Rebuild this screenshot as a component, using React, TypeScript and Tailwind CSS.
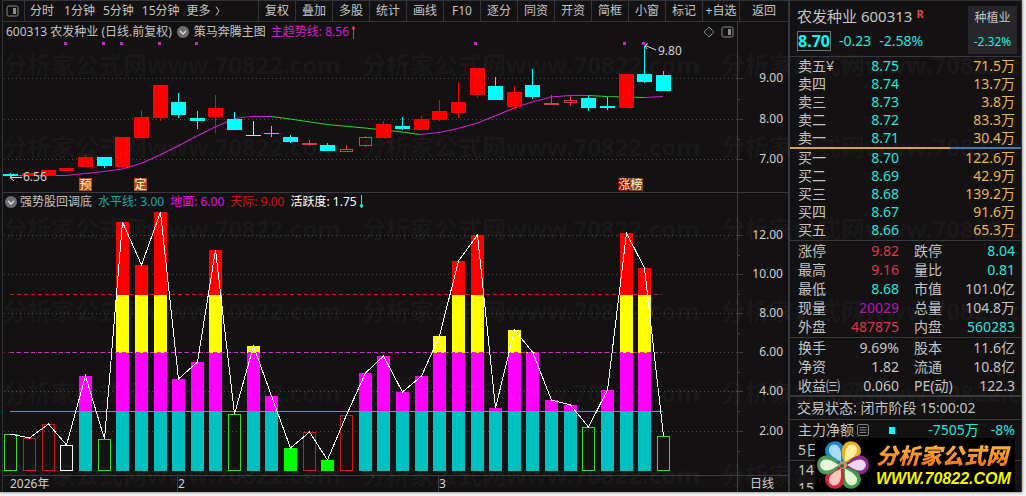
import { clsx } from "clsx";

type Kind = "up" | "down" | "hollow" | "flat" | "doji";

interface Candle {
  top: number;
  bottom: number;
  high: number;
  low: number;
  kind: Kind;
}

const c = (top: number, bottom: number, high: number, low: number, kind: Kind): Candle => ({ top, bottom, high, low, kind });

const candles: Candle[] = [
  c(174, 176, 173, 178, "down"),
  c(173, 176, 173, 176, "up"),
  c(170, 176, 170, 176, "up"),
  c(168, 171, 168, 171, "up"),
  c(157, 167, 155, 167, "up"),
  c(157, 166, 157, 168, "down"),
  c(137, 167, 137, 167, "up"),
  c(117, 138, 110, 138, "up"),
  c(85, 118, 85, 121, "up"),
  c(102, 115, 93, 118, "down"),
  c(118, 121, 111, 129, "down"),
  c(108, 117, 95, 133, "up"),
  c(119, 130, 112, 130, "down"),
  c(135, 136, 121, 136, "doji"),
  c(133, 134, 126, 137, "down"),
  c(137, 142, 135, 143, "down"),
  c(143, 145, 140, 146, "flat"),
  c(145, 151, 143, 151, "down"),
  c(149, 152, 145, 152, "hollow"),
  c(137, 146, 136, 147, "hollow"),
  c(124, 138, 121, 138, "up"),
  c(126, 129, 117, 130, "down"),
  c(119, 130, 116, 130, "up"),
  c(111, 120, 100, 121, "up"),
  c(102, 113, 82, 118, "up"),
  c(68, 95, 68, 98, "up"),
  c(86, 100, 77, 100, "down"),
  c(92, 107, 86, 110, "up"),
  c(85, 97, 69, 99, "down"),
  c(103, 105, 95, 105, "flat"),
  c(100, 103, 96, 106, "hollow"),
  c(98, 108, 96, 111, "down"),
  c(106, 108, 97, 110, "down"),
  c(74, 108, 74, 108, "up"),
  c(74, 82, 46, 83, "down"),
  c(75, 91, 71, 91, "down"),
];

const candleColor: Record<Kind, string> = {
  up: "#ff0000",
  down: "#00ffff",
  hollow: "#d83a4a",
  flat: "#d83a4a",
  doji: "#d8d8d8",
};

// y of the top of every bar in the lower chart
const activity = [
  434, 438, 424, 445, 376, 439, 222, 265, 212, 379, 362, 250, 414, 346, 396, 448, 432, 460,
  415, 373, 356, 392, 376, 336, 261, 235, 408, 330, 352, 400, 405, 427, 390, 233, 268, 436,
];

// bars below the level line get their own outline or fill
const lowBars: Record<number, { color: string; filled?: boolean }> = {
  0: { color: "#33dd33" },
  1: { color: "#cc1a1a" },
  2: { color: "#cc1a1a" },
  3: { color: "#ffffff" },
  5: { color: "#33dd33" },
  12: { color: "#33dd33" },
  15: { color: "#00ff00", filled: true },
  16: { color: "#cc1a1a" },
  17: { color: "#00ff00", filled: true },
  18: { color: "#cc1a1a" },
  31: { color: "#33dd33" },
  35: { color: "#33dd33" },
};

const layers = [
  { from: 471, to: 411, color: "#00c0c0" },
  { from: 411, to: 353, color: "#ff00ff" },
  { from: 353, to: 295, color: "#ffff00" },
  { from: 295, to: 200, color: "#ff0000" },
];

const xOf = (i: number) => Math.round(10.3 + i * 18.65) + 0.5;

const sells = [
  ["卖五¥", "8.75", "71.5万"],
  ["卖四", "8.74", "13.7万"],
  ["卖三", "8.73", "3.8万"],
  ["卖二", "8.72", "83.3万"],
  ["卖一", "8.71", "30.4万"],
];

const buys = [
  ["买一", "8.70", "122.6万"],
  ["买二", "8.69", "42.9万"],
  ["买三", "8.68", "139.2万"],
  ["买四", "8.67", "91.6万"],
  ["买五", "8.66", "65.3万"],
];

const cyan = "text-[#22e6dc]";
const red = "text-[#e0344a]";
const gray = "text-[#c4c4c4]";

const quotes = [
  ["涨停", "9.82", red, "跌停", "8.04", cyan],
  ["最高", "9.16", red, "量比", "0.81", cyan],
  ["最低", "8.68", cyan, "市值", "101.0亿", gray],
  ["现量", "20029", "text-[#b414b4]", "总量", "104.8万", gray],
  ["外盘", "487875", red, "内盘", "560283", cyan],
];

const ratios = [
  ["换手", "9.69%", gray, "股本", "11.6亿", gray],
  ["净资", "1.82", gray, "流通", "10.8亿", gray],
  ["收益㈢", "0.060", gray, "PE(动)", "122.3", gray],
];

const tools = ["复权", "叠加", "多股", "统计", "画线", "F10", "逐分", "同资", "开资", "简框", "小窗", "标记", "+自选"];

function PanelIcon({ className }: { className?: string }) {
  return (
    <svg viewBox="0 0 13 12" className={clsx("h-3 w-[13px] shrink-0", className)}>
      <rect x="1" y="1" width="11" height="10" rx="1.5" fill="none" stroke="#8c8c8c" />
      <rect x="7" y="3" width="3" height="6" fill="#8c8c8c" />
    </svg>
  );
}

function FoldButton() {
  return (
    <button aria-label="展开指标" className="shrink-0">
      <svg viewBox="0 0 12 12" className="h-3 w-3">
        <circle cx="6" cy="6" r="6" fill="#6e6e6e" />
        <path d="M3 5l3 3 3-3" fill="none" stroke="#e0e0e0" strokeWidth="1.3" />
      </svg>
    </button>
  );
}

function Arrow({ up }: { up?: boolean }) {
  return (
    <svg viewBox="0 0 5 14" className="ml-[2px] h-[14px] w-[5px]">
      {up ? (
        <path d="M2.5 14V1M1 4h3L2.5 1z" fill="#e0344a" stroke="#e0344a" strokeWidth="1" />
      ) : (
        <path d="M2.5 0v13M1 10h3L2.5 13z" fill="#22e6dc" stroke="#22e6dc" strokeWidth="1" />
      )}
    </svg>
  );
}

function Toolbar() {
  return (
    <nav className="flex h-[22px] items-stretch border-y border-[#33333b] text-xs leading-5">
      <div className="flex flex-1 items-center">
        <button aria-label="侧栏" className="flex h-full w-[22px] items-center border-r border-[#33333b] pl-[3px]">
          <PanelIcon />
        </button>
        <button className="ml-[5px]">分时</button>
        <button className="ml-[10px]">1分钟</button>
        <button className="ml-2">5分钟</button>
        <button className="ml-2">15分钟</button>
        <button className="ml-[7px] flex items-center gap-1">
          更多
          <svg viewBox="0 0 5 10" className="h-[10px] w-[5px]">
            <path d="M1 0.5L4 5 1 9.5" fill="none" stroke="#c4c4c4" />
          </svg>
        </button>
      </div>
      {tools.map((t) => (
        <button key={t} className="w-[37px] border-l border-[#33333b] text-center whitespace-nowrap">
          {t}
        </button>
      ))}
      <button className="w-[50px] border-x border-[#33333b] text-center">返回</button>
    </nav>
  );
}

function Tag({ x, fill, label }: { x: number; fill: string; label: string }) {
  return (
    <g>
      <rect x={x} y="178" width="13" height="13" fill={fill} />
      <text x={x + 0.5} y="189" fill="#fff4dc">{label}</text>
    </g>
  );
}

function PriceChart() {
  return (
    <svg viewBox="3 42 786 150" className="block h-auto w-full text-xs">
      <g stroke="#4a4a4a" strokeDasharray="1 3" shapeRendering="crispEdges">
        {[78.5, 119.5, 159.5].map((y) => (
          <line key={y} x1="4" x2="737" y1={y} y2={y} />
        ))}
      </g>
      <g stroke="#3a3a44" shapeRendering="crispEdges">
        <path d="M737.5 42v150M788.5 42v150" />
        <path d="M738 78.5h5M738 99.5h2M738 119.5h5M738 139.5h2M738 159.5h5" />
      </g>
      <g fill="#d020d0">
        {[65, 103, 121, 159, 196, 475, 624, 643].map((x) => (
          <rect key={x} x={x - 1} y="42" width="3" height="3" />
        ))}
      </g>
      <g fill="none" strokeWidth="1.2">
        <path d="M10 175.5H66L85 173.5 104 171.5 122 169 141 163.5 160 155 178 146 197 136 215 127 234 119Q243 116.5 253 116.5H271" stroke="#d020d0" />
        <path d="M271 116.5L290 119 327 124.5 365 128 402 132 420 134.5" stroke="#2ad42a" />
        <path d="M420 134.5L439 132.5 458 128.5 476 123.5 495 116 514 108 532 102 551 97 570 95.5H588" stroke="#d020d0" />
        <path d="M588 95.5L607 96.5 644 97.5" stroke="#2ad42a" />
        <path d="M644 97.5L663 96.5" stroke="#d020d0" />
      </g>
      <g shapeRendering="crispEdges">
        {candles.map((k, i) => {
          const x = xOf(i);
          const color = candleColor[k.kind];
          if (k.kind === "hollow") {
            return (
              <g key={i} stroke={color} fill="none">
                <path d={`M${x} ${k.high}V${k.top}M${x} ${k.bottom}V${k.low}`} />
                <rect x={x - 6} y={k.top + 0.5} width="12" height={k.bottom - k.top - 1} />
              </g>
            );
          }
          return (
            <g key={i}>
              <line x1={x} x2={x} y1={k.high} y2={k.low} stroke={color} />
              <rect x={x - 7.5} y={k.top} width="15" height={k.bottom - k.top} fill={color} />
            </g>
          );
        })}
      </g>
      <path d="M10.5 177.5H22M14 174l-4 3.5 4 3.5M645.5 45.5L656 50M648 43.5l-3 2 2 3.5" fill="none" stroke="#d8d8d8" />
      <g fill="#d0d0d0">
        <text x="23" y="181">6.56</text>
        <text x="658" y="55">9.80</text>
        <g textAnchor="end">
          <text x="783" y="82">9.00</text>
          <text x="783" y="123">8.00</text>
          <text x="783" y="163">7.00</text>
        </g>
      </g>
      <Tag x={79} fill="#b04a18" label="预" />
      <Tag x={134} fill="#b04a18" label="定" />
      <Tag x={618} fill="#800808" label="涨" />
      <Tag x={630} fill="#854a10" label="榜" />
    </svg>
  );
}

function ActivityChart() {
  const points = activity.map((y, i) => `${xOf(i)},${y}`).join(" ");
  const ticks = [235, 274, 313, 352, 391, 431];
  return (
    <svg viewBox="3 210 786 282" className="block h-auto w-full text-xs">
      <g shapeRendering="crispEdges">
        {ticks.map((y) => (
          <g key={y}>
            <line x1="4" x2="737" y1={y + 0.5} y2={y + 0.5} stroke="#4a4a4a" strokeDasharray="1 3" />
            <path d={`M738 ${y + 0.5}h5M738 ${y + 20.5}h2`} stroke="#3a3a44" />
          </g>
        ))}
        <path d="M3 475.5H789M737.5 210V492M788.5 210V492M177.5 475v17M438.5 475v17M242.5 475v3M308.5 475v3M373.5 475v3" fill="none" stroke="#3a3a44" />
        {activity.map((y, i) => {
          const x = xOf(i);
          const low = lowBars[i];
          if (low) {
            return (
              <rect
                key={i}
                x={x - 6}
                y={y + 0.5}
                width="12"
                height={470 - y}
                stroke={low.color}
                fill={low.filled ? low.color : "none"}
              />
            );
          }
          return layers
            .filter((l) => l.from > y)
            .map((l) => {
              const top = Math.max(y, l.to);
              return <rect key={l.color + i} x={x - 6.5} y={top} width="13" height={l.from - top} fill={l.color} />;
            });
        })}
        <path d="M10 294.5H662" stroke="#d01c1c" strokeDasharray="4 3" />
        <path d="M10 352.5H662" stroke="#d828d8" strokeDasharray="4 3" />
        <path d="M10 411.5H663" stroke="#20b4bc" />
      </g>
      <polyline points={points} fill="none" stroke="#ffffff" shapeRendering="crispEdges" />
      <g fill="#d0d0d0">
        <text x="10" y="488">2026年</text>
        <text x="178" y="488">2</text>
        <text x="439" y="488">3</text>
        <text x="750" y="488">日线</text>
        <g textAnchor="end">
          {ticks.map((y, i) => (
            <text key={y} x="783" y={y + 4}>
              {(12 - i * 2).toFixed(2)}
            </text>
          ))}
        </g>
      </g>
    </svg>
  );
}

function Depth({ rows, label }: { rows: string[][]; label: string }) {
  return (
    <table aria-label={label} className="w-full table-fixed text-sm leading-[18px]">
      <tbody>
        {rows.map(([name, price, volume]) => (
          <tr key={name} className="h-[18px]">
            <th scope="row" className="w-[50px] p-0 pl-2 text-left font-normal whitespace-nowrap">{name}</th>
            <td className="w-[59px] p-0 text-right text-[#22e6dc]">{price}</td>
            <td className="p-0 pr-[6px] text-right text-[#e8b450]">{volume}</td>
          </tr>
        ))}
      </tbody>
    </table>
  );
}

function Stats({ rows, label }: { rows: string[][]; label: string }) {
  return (
    <table aria-label={label} className="w-full table-fixed text-sm leading-[19px]">
      <tbody>
        {rows.map(([a, av, ac, b, bv, bc]) => (
          <tr key={a} className="h-[19px]">
            <th scope="row" className="w-[55px] p-0 pl-2 text-left font-normal whitespace-nowrap">{a}</th>
            <td className={clsx("w-[54px] p-0 text-right", ac)}>{av}</td>
            <th scope="row" className="w-[60px] p-0 pl-[15px] text-left font-normal whitespace-nowrap">{b}</th>
            <td className={clsx("p-0 pr-[6px] text-right whitespace-nowrap", bc)}>{bv}</td>
          </tr>
        ))}
      </tbody>
    </table>
  );
}

const petals = [
  { angle: -30, outer: "#1f86c8", inner: "#a8dcf4" },
  { angle: 30, outer: "#e8b020", inner: "#fff0a0" },
  { angle: 90, outer: "#8a2a8c", inner: "#f0d8ec" },
  { angle: 150, outer: "#3c9a48", inner: "#e4f4d0" },
  { angle: 210, outer: "#d42838", inner: "#f8c8c0" },
  { angle: 270, outer: "#4c9c60", inner: "#e8f4dc" },
];

function SiteLogo() {
  return (
    <a
      href="#"
      className="absolute right-[6px] bottom-0 flex h-[54px] w-[200px] items-center gap-[6px] overflow-hidden bg-black pl-px whitespace-nowrap"
    >
      <svg viewBox="-27 -27 54 54" className="h-[54px] w-[54px] shrink-0">
        {petals.map((p) => (
          <g key={p.angle} transform={`rotate(${p.angle})`}>
            <path d="M0-2C-4-6-10-11-9.5-18C-8-28.500 8-28.500 9.500-18C10-11 4-6 0-2z" fill={p.outer} />
            <path d="M0-4C-2-8-6-12-5.500-18C-4-24.500 4-24.500 5.500-18C6-12 2-8 0-4z" fill={p.inner} />
          </g>
        ))}
        <circle r="4" fill="#b89868" />
        <circle cx="-1" cy="1" r="2" fill="#704838" />
      </svg>
      <span className="flex flex-col">
        <span className="bg-linear-to-b from-[#ffc040] to-[#f06818] bg-clip-text text-[22px] leading-7 font-black text-transparent italic">
          分析家公式网
        </span>
        <span className="font-['Liberation_Sans',sans-serif] text-base leading-5 font-bold text-[#f4f400] italic">WWW.70822.COM</span>
      </span>
    </a>
  );
}

function QuotePanel() {
  return (
    <aside className="relative w-[233px] shrink-0 overflow-hidden border-t border-r border-l border-[#33333b]">
      <header className="flex h-[56px] justify-between border-b border-[#3a3a3e] pr-1 pl-[7px]">
        <div className="pt-1">
          <h1 className="flex items-start gap-1 text-[15px] leading-[22px]">
            农发种业 600313
            <span className="text-[11px] leading-[18px] font-bold text-[#e04848]">R</span>
          </h1>
          <p className="mt-1 flex items-center gap-2 text-sm leading-[18px] text-[#22e6dc]">
            <strong className="border border-[#707070] text-base leading-[18px] text-[#00ffff]">8.70</strong>
            <span>-0.23</span>
            <span>-2.58%</span>
          </p>
        </div>
        <div className="mt-[5px] h-12 w-[49px] bg-[#27272b] pt-[2px] text-center text-xs leading-[19px]">
          种植业
          <span className="mt-[5px] block text-[#22e6dc]">-2.32%</span>
        </div>
      </header>
      <Depth rows={sells} label="卖盘" />
      <div className="flex h-[2px]">
        <div className="w-[160px] bg-[#d8a040]" />
        <div className="flex-1 bg-[#4878b0]" />
      </div>
      <Depth rows={buys} label="买盘" />
      <div className="mt-px border-t border-[#3a3a3e]">
        <Stats rows={quotes} label="行情" />
      </div>
      <div className="mt-px border-t border-[#3a3a3e]">
        <Stats rows={ratios} label="财务" />
      </div>
      <div className="border-y border-t-2 border-[#3a3a3e] pl-[7px] text-sm leading-[22px]">交易状态: 闭市阶段 15:00:02</div>
      <div className="flex items-center pr-[6px] pl-2 text-sm leading-5 text-[#22e6dc]">
        <span className="text-[#c4c4c4]">主力净额</span>
        <svg viewBox="0 0 12 12" className="ml-[3px] h-3 w-3">
          <rect x="0.5" y="0.5" width="11" height="11" rx="1.5" fill="none" stroke="#808080" />
          <path d="M2.5 3.5h7M2.5 6h7M2.5 8.5h7" stroke="#808080" />
        </svg>
        <span className="ml-5 h-[7px] w-[6px] bg-[#00ffff]" />
        <span className="flex-1 text-right">-7505万</span>
        <span className="ml-3">-8%</span>
      </div>
      <div className="pl-2 text-sm leading-5">5日</div>
      <div className="border-t border-[#3a3a3e] pl-2 text-sm leading-[18px]">14:</div>
      <div className="h-[10px] overflow-hidden pl-2 text-sm leading-[18px]">15:</div>
      <SiteLogo />
    </aside>
  );
}

function Watermark() {
  return (
    <div aria-hidden className="pointer-events-none absolute inset-0 overflow-hidden pt-6 pl-[3px] select-none">
      {[0, 1, 2, 3, 4, 5].map((row) => (
        <div key={row} className="flex h-[82px] items-center text-2xl font-bold whitespace-nowrap text-white/4">
          {[0, 1, 2].map((col) => (
            <span key={col} className="w-[359px] shrink-0">
              分析家公式网www.70822.com
            </span>
          ))}
        </div>
      ))}
    </div>
  );
}

export default function App() {
  return (
    <div className="bg-[#f4f4f4] pr-1 pb-1 font-['Noto_Sans','Noto_Sans_CJK_SC',sans-serif] text-[#c4c4c4]">
      <main className="relative flex overflow-hidden bg-[#131112] shadow-[0_0_3px_#555]">
        <Watermark />
        <div className="min-w-0 flex-1 pl-[2px]">
          <div className="border-l border-[#33333b]">
            <Toolbar />
            <section aria-label="主图">
              <div className="flex h-5 items-stretch text-xs leading-5">
                <div className="flex flex-1 items-center pl-[3px] whitespace-nowrap">
                  <span>600313 农发种业 (日线.前复权)</span>
                  <span className="mx-[5px] flex">
                    <FoldButton />
                  </span>
                  <span>策马奔腾主图</span>
                  <span className="ml-[5px] text-[#d020d0]">主趋势线: 8.56</span>
                  <Arrow up />
                  <svg viewBox="0 0 12 12" className="ml-auto h-3 w-3">
                    <path d="M6 1l5 5-5 5-5-5z" fill="none" stroke="#808080" />
                  </svg>
                  <PanelIcon className="mr-[3px] ml-[6px]" />
                </div>
                <div className="w-[52px] border-x border-[#3a3a44]" />
              </div>
              <PriceChart />
            </section>
            <section aria-label="副图" className="border-t border-[#3a3a44]">
              <div className="flex h-[17px] items-stretch text-xs leading-[17px]">
                <div className="flex flex-1 items-center pl-[2px] whitespace-nowrap">
                  <FoldButton />
                  <span className="ml-[3px]">强势股回调底</span>
                  <span className="ml-[6px] text-[#10a8a8]">水平线: 3.00</span>
                  <span className="ml-[6px] text-[#e010e0]">地面: 6.00</span>
                  <span className="ml-[6px] text-[#d01414]">天际: 9.00</span>
                  <span className="ml-[6px] text-white">活跃度: 1.75</span>
                  <Arrow />
                </div>
                <div className="w-[52px] border-x border-[#3a3a44]" />
              </div>
              <ActivityChart />
            </section>
          </div>
        </div>
        <QuotePanel />
      </main>
    </div>
  );
}
